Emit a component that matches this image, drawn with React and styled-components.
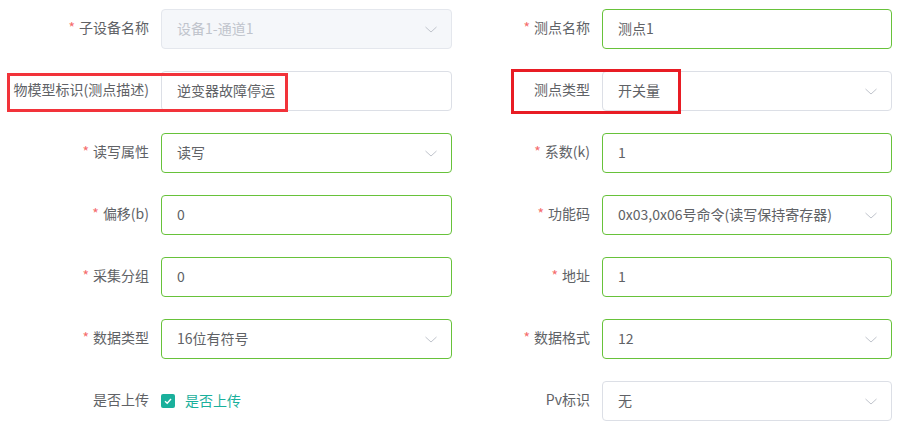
import React from 'react'
import styled, { createGlobalStyle, css } from 'styled-components'

const GlobalStyle = createGlobalStyle`
  html, body {
    margin: 0;
    padding: 0;
    background: #fff;
  }
  body {
    font-family: "Noto Sans CJK SC", "Noto Sans", "Liberation Sans", sans-serif;
    font-size: 14px;
    color: #606266;
  }
`

const Page = styled.div`
  position: relative;
  width: 915px;
  height: 432px;
  overflow: hidden;
`

const Form = styled.form`
  display: grid;
  grid-template-columns: 441px 440px;
  row-gap: 22px;
  padding: 9px 0 0 11px;
  margin: 0;
`

const FormItem = styled.div`
  display: flex;
  align-items: center;
  height: 40px;
`

const Label = styled.label`
  width: 150px;
  box-sizing: border-box;
  padding: 0 12px 3px 0;
  text-align: right;
  line-height: 37px;
  color: #606266;
  white-space: nowrap;

  ${({ required }) => required && css`
    &::before {
      content: '*';
      color: #f56c6c;
      margin-right: 4px;
    }
  `}
`

const Content = styled.div`
  flex: 1;
  display: flex;
  align-items: center;
  height: 40px;
`

const borderColor = {
  success: '#67c23a',
  plain: '#dcdfe6',
  disabled: '#e4e7ed',
}

const Field = styled.div`
  flex: 1;
  box-sizing: border-box;
  height: 40px;
  display: flex;
  align-items: center;
  padding: 0 15px 3px;
  border: 1px solid ${({ status }) => borderColor[status] || borderColor.plain};
  border-radius: 4px;
  background: ${({ status }) => (status === 'disabled' ? '#f5f7fa' : '#fff')};
  color: ${({ status }) => (status === 'disabled' ? '#c0c4cc' : '#606266')};
  white-space: nowrap;
`

const Value = styled.span`
  flex: 1;
  overflow: hidden;
`

const Arrow = styled.svg`
  width: 14px;
  height: 14px;
  margin: 3px -2px 0 0;
  flex: none;
`

const CheckWrap = styled.div`
  display: flex;
  align-items: center;
  gap: 10px;
  color: #1ab09c;
  padding-bottom: 2px;
`

const CheckBox = styled.span`
  width: 14px;
  height: 14px;
  margin-top: 2px;
  border-radius: 2px;
  background: #1ab09c;
  display: flex;
  align-items: center;
  justify-content: center;
`

const Mark = styled.div`
  position: absolute;
  border: 3px solid ${({ color }) => color};
  box-sizing: border-box;
  left: ${({ x }) => x}px;
  top: ${({ y }) => y}px;
  width: ${({ w }) => w}px;
  height: ${({ h }) => h}px;
  pointer-events: none;
`

const ChevronDown = () => (
  <Arrow viewBox="0 0 14 14">
    <polyline points="1.5,5 7,10 12.5,5" fill="none" stroke="#c0c4cc" strokeWidth="1" />
  </Arrow>
)

const Input = ({ value, status, select }) => (
  <Field status={status}>
    <Value>{value}</Value>
    {select && <ChevronDown />}
  </Field>
)

const fields = [
  { label: '子设备名称', required: true, value: '设备1-通道1', status: 'disabled', select: true },
  { label: '测点名称', required: true, value: '测点1', status: 'success' },
  { label: '物模型标识(测点描述)', value: '逆变器故障停运', status: 'plain' },
  { label: '测点类型', value: '开关量', status: 'plain', select: true },
  { label: '读写属性', required: true, value: '读写', status: 'success', select: true },
  { label: '系数(k)', required: true, value: '1', status: 'success' },
  { label: '偏移(b)', required: true, value: '0', status: 'success' },
  { label: '功能码', required: true, value: '0x03,0x06号命令(读写保持寄存器)', status: 'success', select: true },
  { label: '采集分组', required: true, value: '0', status: 'success' },
  { label: '地址', required: true, value: '1', status: 'success' },
  { label: '数据类型', required: true, value: '16位有符号', status: 'success', select: true },
  { label: '数据格式', required: true, value: '12', status: 'success', select: true },
]

export default function App() {
  return (
    <Page>
      <GlobalStyle />
      <Form>
        {fields.map((f) => (
          <FormItem key={f.label}>
            <Label required={f.required}>{f.label}</Label>
            <Content>
              <Input value={f.value} status={f.status} select={f.select} />
            </Content>
          </FormItem>
        ))}
        <FormItem>
          <Label>是否上传</Label>
          <Content>
            <CheckWrap>
              <CheckBox>
                <svg width="10" height="10" viewBox="0 0 10 10">
                  <polyline points="2,5.2 4.2,7.2 8,3" fill="none" stroke="#fff" strokeWidth="1.4" />
                </svg>
              </CheckBox>
              是否上传
            </CheckWrap>
          </Content>
        </FormItem>
        <FormItem>
          <Label>Pv标识</Label>
          <Content>
            <Input value="无" status="plain" select />
          </Content>
        </FormItem>
      </Form>
      <Mark color="#f2333a" x={7} y={73} w={281} h={39} />
      <Mark color="#e81c24" x={511} y={69} w={170} h={45} />
    </Page>
  )
}
